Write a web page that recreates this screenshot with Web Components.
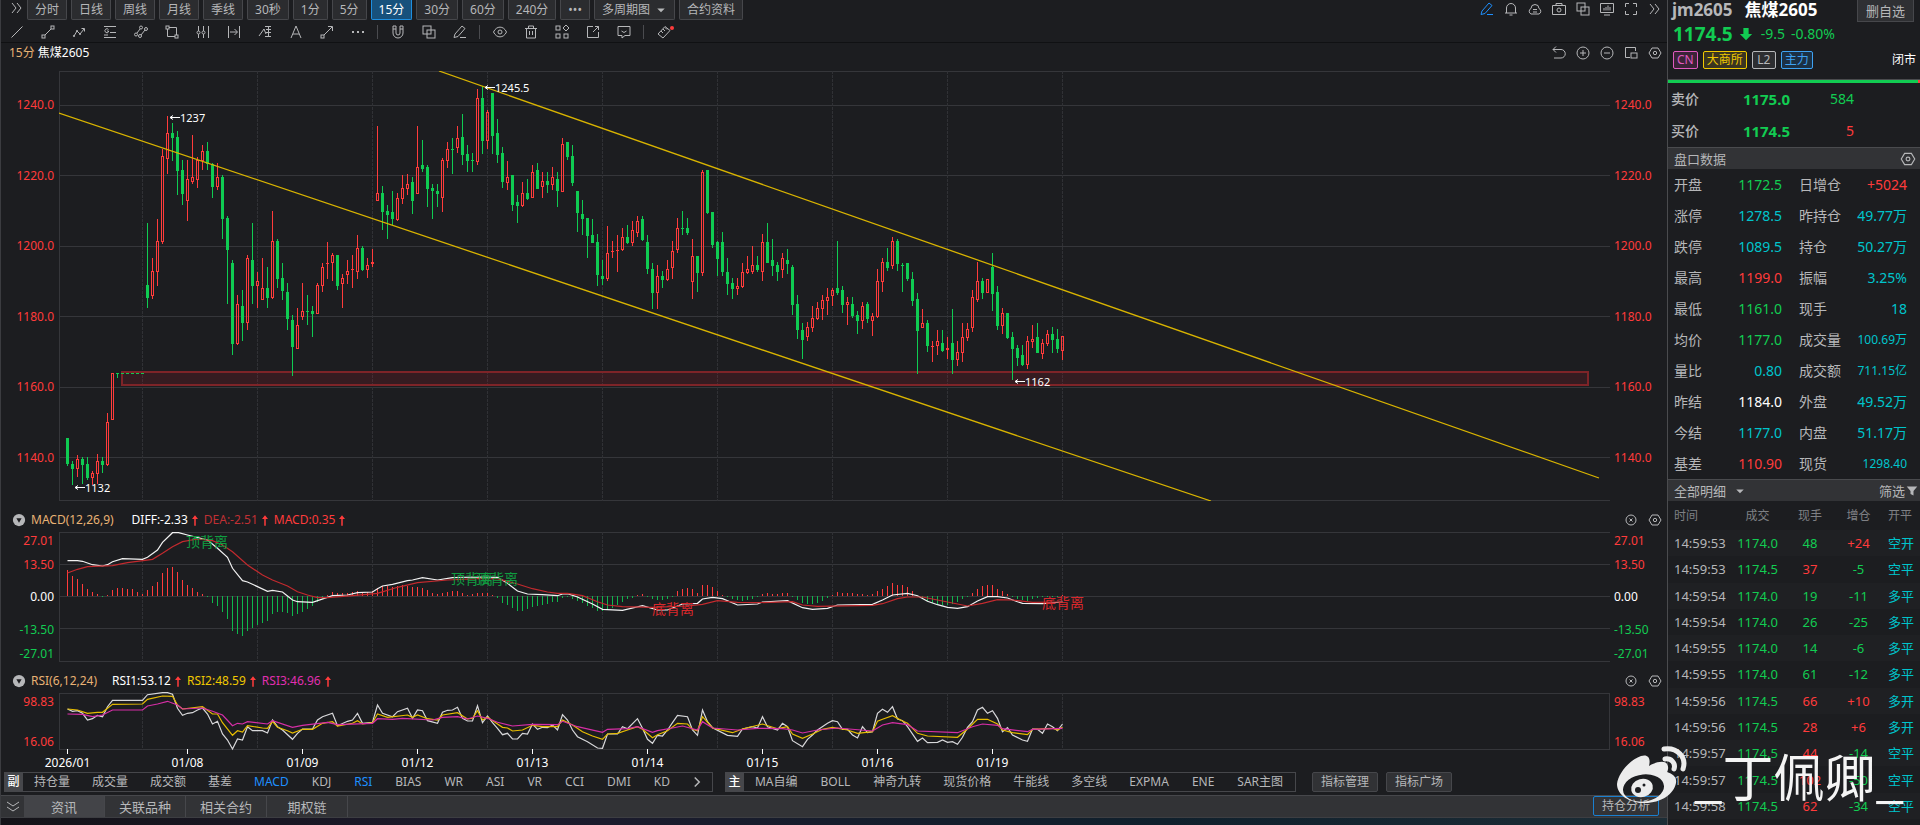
<!DOCTYPE html>
<html lang="zh-CN">
<head>
<meta charset="utf-8">
<title>焦煤2605 - 15分</title>
<style>
	html, body {
		margin: 0;
		background: #1c1d20;
	}
	body {
		--bg: #1c1d20;
		--bar: #323336;
		--line: #3b3c40;
		--text: #b6b7b9;
		--red: #ff3b3b;
		--green: #12cc52;
		--cyan: #00c4cc;
		--blue: #1e90ff;
		color: var(--text);
		font: 12px/18px "Noto Sans", "Noto Sans CJK SC", sans-serif;
	}
</style>
</head>
<body>
<trade-app>
	<period-bar slot="top"></period-bar>
	<draw-tools slot="top"></draw-tools>
	<price-chart slot="charts"></price-chart>
	<macd-chart slot="charts"></macd-chart>
	<rsi-chart slot="charts"></rsi-chart>
	<indicator-bar slot="bottom"></indicator-bar>
	<info-tabs slot="bottom"></info-tabs>
	<quote-panel slot="side">
		<quote-head></quote-head>
		<quote-grid></quote-grid>
		<trade-list></trade-list>
	</quote-panel>
	<water-mark slot="over">_丁佩卿_</water-mark>
</trade-app>

<script>
const RESET = `
	:host { display: block; box-sizing: border-box; }
	* { box-sizing: border-box; }
	button, select {
		margin: 0;
		padding: 0;
		border: 0;
		border-radius: 0;
		background: none;
		color: inherit;
		font: inherit;
		white-space: nowrap;
		appearance: none;
	}
`;

function attach(el, css, html){
	el.attachShadow({mode:"open"});
	el.shadowRoot.innerHTML = `<style>${RESET}${css}</style>${html}`;
}

const ICONS = {
	chevrons: `<path d="M3 3l4 5-4 5M8 3l4 5-4 5"/>`,
	down: `<path d="M2 3l6 4 6-4M2 8l6 4 6-4"/>`,
	line: `<path d="M2.500 13.500l11-11"/>`,
	segment: `<path d="M5 11l6-6"/><rect x="2" y="11" width="3" height="3"/><rect x="11" y="2" width="3" height="3"/>`,
	wave: `<path d="M3 12l3-5 3 3 4-5M10.500 4.500H13.500V7.500"/><circle cx="3" cy="12" r=".7"/><circle cx="6" cy="7" r=".7"/><circle cx="9" cy="10" r=".7"/>`,
	fib: `<path d="M2 2.500h12M8 8.500h6M2 13.500h12M2 11h4"/><path d="M6.500 5.500a2 2 0 1 0 0 2.500V7H5"/>`,
	fork: `<path d="M4 9l3-4M8 11l4-5"/><circle cx="3" cy="10.500" r="1.500"/><circle cx="8" cy="3.500" r="1.500"/><circle cx="7" cy="12" r="1.500"/><circle cx="13" cy="5" r="1.500"/>`,
	crop: `<rect x="2" y="2" width="3" height="3"/><rect x="11" y="11" width="3" height="3"/><path d="M5 3.500h7.500V11M3.500 5v7.500H11"/>`,
	sliders: `<path d="M3.500 2v5M3.500 10v4M8.500 2v5M8.500 10v4M13.500 2v12"/><circle cx="3.500" cy="8.500" r="1.500"/><circle cx="8.500" cy="8.500" r="1.500"/>`,
	measure: `<path d="M2.500 2v12M13.500 2v12M4 8h7M8.500 5l3 3-3 3"/>`,
	ruler: `<path d="M2 12l5-7 2 5M8 2.500h6M9 5.500h5M9 8.500h5M8 12.500h6M11.500 2v11"/>`,
	letter: `<path d="M3 14L8 2l5 12M5 10h6"/>`,
	arrow: `<path d="M5 11l8-8M9 2.500h4.500V7"/><rect x="2" y="11" width="3" height="3"/>`,
	dots: `<path d="M2 8h2M7 8h2M12 8h2" stroke-width="2"/>`,
	magnet: `<path d="M3 2v7a5 5 0 0 0 10 0V2h-3v7a2 2 0 0 1-4 0V2zM3 5h3M10 5h3"/>`,
	layers: `<rect x="2" y="2" width="8" height="8"/><rect x="6" y="6" width="8" height="8"/>`,
	pencil: `<path d="M3 10l7-8 3 2.500-7 8-4 1zM8 13.500h6"/>`,
	eye: `<path d="M1.500 8c3-6.500 10-6.500 13 0-3 6.500-10 6.500-13 0z"/><circle cx="8" cy="8" r="2"/>`,
	trash: `<path d="M2 4.500h12M5.500 4V2h5v2M3.500 5v9h9V5M6.500 7v4M9.500 7v4"/>`,
	apps: `<rect x="2" y="2" width="4" height="4"/><rect x="2" y="10" width="4" height="4"/><rect x="10" y="10" width="4" height="4"/><path d="M12 1l3 3-3 3-3-3z"/>`,
	export: `<path d="M8 2.500H2.500v11h11V8M8 8l5.500-5.500M10 2.500h3.500V6"/>`,
	chat: `<path d="M2 2.500h12v9H9L6 14v-2.500H2zM5.500 7l2.500 1.500L10.500 7"/>`,
	tag: `<path d="M2 10l7-7.500 5 4-7 7.500zM5 7l2 2M7 5l2 2M9 3.500l2 2"/>`,
	bell: `<path d="M2 12h12M3.500 12V7a4.500 4.500 0 0 1 9 0v5M6.500 14h3"/>`,
	cloud: `<path d="M4 13a3 3 0 0 1 0-5.500 4 4 0 0 1 8 0A3 3 0 0 1 12 13zM6 8.500h4M6 11h4"/>`,
	camera: `<path d="M1.500 4.500h13v9h-13zM5 4V2.500h6V4"/><circle cx="8" cy="9" r="2"/>`,
	monitor: `<path d="M1.500 2.500h13v9h-13zM5 14h6M5 9.500V7M7 9.500V6M9 9.500V4.500M11 9.500V6"/>`,
	full: `<path d="M2.500 6V2.500H6M10 2.500h3.500V6M13.500 10v3.500H10M6 13.500H2.500V10"/>`,
	undo: `<path d="M5 1.500L2 4.500l3 3M2 4.500h8a4 4 0 0 1 0 8.500H3"/>`,
	plus: `<circle cx="8" cy="8" r="6"/><path d="M5 8h6M8 5v6"/>`,
	minus: `<circle cx="8" cy="8" r="6"/><path d="M5 8h6"/>`,
	close: `<circle cx="8" cy="8" r="5"/><path d="M6.500 6.500l3 3M9.500 6.500l-3 3"/>`,
	panes: `<path d="M7 12.500H2.500v-10h10V6"/><rect x="8" y="8" width="6" height="5"/>`,
	hex: `<path d="M5 3h6l3 5-3 5H5L2 8z"/><circle cx="8" cy="8" r="1.700"/>`,
	fold: `<circle cx="8" cy="8" r="7" fill="#b6b7b9" stroke="none"/><path d="M5 6h6l-3 5z" fill="#1c1d20" stroke="none"/>`,
	rise: `<path d="M8 1l4 5H9v9H7V6H4z" fill="currentColor" stroke="none"/>`,
	fall: `<path d="M5 1h6v7h4l-7 7-7-7h4z" fill="currentColor" stroke="none"/>`,
	caret: `<path d="M3 6h10l-5 5z" fill="currentColor" stroke="none"/>`,
	next: `<path d="M5 2l6 6-6 6" stroke-width="2"/>`,
	funnel: `<path d="M1 2h14l-5 6v6l-4-2V8z" fill="currentColor" stroke="none"/>`
};

class UiIcon extends HTMLElement {
	constructor(){
		super();
		attach(this, `
			:host { display: inline-block; width: 16px; height: 16px; flex: none; }
			svg { display: block; width: 100%; height: 100%; fill: none; stroke: currentColor; stroke-width: 1; }
		`, `<svg viewBox="0 0 16 16" aria-hidden="true"></svg>`);
	}
	connectedCallback(){
		this.shadowRoot.querySelector("svg").innerHTML = ICONS[this.getAttribute("name")];
	}
}
customElements.define("ui-icon", UiIcon);

const icon = (name, cls="") => `<ui-icon name="${name}" class="${cls}"></ui-icon>`;
const iconButton = (name, label) => `<button aria-label="${label}">${icon(name)}</button>`;

customElements.define("trade-app", class extends HTMLElement {
	constructor(){
		super();
		attach(this, `
			:host {
				display: grid;
				grid-template-columns: minmax(0, 1fr) 253px;
				min-height: 100vh;
				position: relative;
				overflow: hidden;
				background: var(--bg);
			}
			main {
				display: flex;
				flex-direction: column;
				border-left: 1px solid var(--line);
			}
			.desk {
				flex: 1;
				min-height: 7px;
				background: linear-gradient(90deg, #141318, #1d1a2c 30%, #10202c 70%, #1d2d36);
			}
		`, `
			<main>
				<slot name="top"></slot>
				<slot name="charts"></slot>
				<slot name="bottom"></slot>
				<div class="desk"></div>
			</main>
			<slot name="side"></slot>
			<slot name="over"></slot>
		`);
	}
});

customElements.define("period-bar", class extends HTMLElement {
	constructor(){
		super();
		const before = ["分时","日线","周线","月线","季线","30秒","1分","5分","15分","30分","60分","240分","•••"];
		const tools = [["pencil","画线"],["bell","预警"],["cloud","云端"],["camera","截图"],["layers","叠加"],["monitor","看盘"],["full","全屏"],["chevrons","收起"]];
		attach(this, `
			:host { display: flex; gap: 4px; height: 22px; align-items: flex-start; }
			.more { width: 22px; height: 18px; padding-left: 8px; }
			.tab, .pick {
				height: 20px;
				padding: 0 7px;
				border: 1px solid #46474b;
				border-top: 0;
				background: #2b2c2f;
				border-radius: 0 0 2px 2px;
				line-height: 18px;
			}
			.tab.on { background: #17517c; border-color: #1e8fe0; color: #fff; }
			.pick { display: flex; align-items: center; gap: 4px; }
			.pick ui-icon { width: 12px; height: 12px; pointer-events: none; }
			.tools { display: flex; margin-left: auto; }
			.tools button { width: 24px; height: 18px; display: grid; place-items: center; }
			.tools button:first-child { color: var(--blue); }
		`, `
			<button class="more" aria-label="展开">${icon("chevrons")}</button>
			${before.map((t) => `<button class="tab${t=="15分"?" on":""}">${t}</button>`).join("")}
			<label class="pick"><select aria-label="多周期图"><option>多周期图</option></select>${icon("caret")}</label>
			<button class="tab">合约资料</button>
			<div class="tools">${tools.map((t) => iconButton(...t)).join("")}</div>
		`);
	}
});

customElements.define("draw-tools", class extends HTMLElement {
	constructor(){
		super();
		const groups = [
			["line","segment","wave","fib","fork","crop","sliders","measure","ruler","letter","arrow","dots"],
			["magnet","layers","pencil"],
			["eye","trash","apps","export","chat"],
			["tag"]
		];
		attach(this, `
			:host { display: flex; height: 21px; border-bottom: 1px solid #101113; }
			button { width: 31px; height: 20px; display: inline-grid; place-items: center; position: relative; }
			hr { width: 1px; height: 14px; margin: 3px 4px; border: 0; background: #4a4b4f; }
			.tag::after {
				content: "";
				position: absolute;
				top: 4px;
				right: 5px;
				width: 4px;
				height: 4px;
				border-radius: 50%;
				background: var(--red);
			}
		`, groups.map((g) => g.map((n) => `<button class="${n}" aria-label="${n}">${icon(n)}</button>`).join("")).join("<hr>"));
	}
});

/* ---- chart data ---- */

// one bar per entry: direction (r up, g down), wick top, body top, body bottom, wick bottom
// values are thirds of a pixel
const BARS = `
g1134 1134 1213 1218,g1203 1212 1227 1274,r1185 1197 1227 1251,g1191 1197 1215 1272,g1191 1213 1254 1260,
r1232 1240 1253 1274,r1182 1203 1242 1272,g1191 1203 1215 1239,r1059 1086 1215 1218,r940 940 1081 1081,
g940 940 940 954,g940 940 940 940,g940 940 940 940,g940 940 940 940,g940 940 940 940,g940 940 940 940,
g489 675 714 744,r594 633 708 717,r477 543 636 678,r267 288 546 552,r168 219 297 342,g189 219 234 303,
g213 231 333 405,g300 330 402 435,r300 357 423 483,r225 351 366 372,r291 300 360 384,r255 273 303 330,
g246 273 312 330,g309 312 381 414,r309 351 381 390,g345 351 477 537,g468 474 570 732,g600 609 852 885,
r705 732 852 855,g690 738 789 843,r585 594 789 810,g489 600 678 732,r636 663 678 744,r594 684 720 720,
g621 684 714 744,r453 543 714 717,g537 543 657 684,g609 654 693 720,g669 696 777 810,g765 780 861 948,
r744 795 867 867,r669 753 770 780,g705 754 754 795,g738 753 762 831,r669 675 762 762,r609 621 678 696,
r546 609 609 657,r579 585 609 663,g585 585 678 690,r642 654 672 744,r600 633 645 672,r585 628 628 684,
r525 564 636 657,g558 564 630 633,r594 615 630 654,r567 606 612 621,r198 399 423 423,g378 399 456 510,
g435 453 465 537,g393 456 477 495,r399 414 480 483,r345 384 417 432,r342 372 388 405,g351 366 423 462,
r198 321 402 402,g240 315 327 336,g315 321 387 441,g372 384 393 477,g372 393 402 441,r294 300 414 456,
r246 267 303 324,g234 267 267 342,r198 234 264 279,g162 231 285 315,g255 282 303 336,g279 300 300 336,
r87 114 306 315,g78 114 243 282,r150 156 243 267,g99 99 228 282,g177 219 285 309,g261 279 366 384,
r303 351 369 390,g345 345 435 453,g405 426 438 489,r366 399 438 441,g357 399 417 420,r315 336 414 414,
g309 330 387 387,r336 363 381 414,g336 363 375 399,r321 351 375 390,g336 357 393 441,r234 252 396 396,
g246 246 291 300,g255 288 369 378,g393 393 459 516,g420 462 477 525,g474 474 528 594,g477 525 549 549,
g522 546 645 678,g600 648 657 675,r498 579 657 663,r543 574 574 594,r525 569 569 636,r504 531 570 573,
g495 531 549 552,r483 510 549 558,r468 483 519 531,g468 477 540 543,g525 546 627 642,g609 627 699 747,
r615 648 699 747,g633 648 660 684,r600 627 660 663,r543 573 624 657,r474 504 570 579,g453 505 505 525,
g474 504 519 525,r537 588 666 717,g588 588 639 696,r330 336 639 648,g330 330 459 462,g456 456 555 564,
g543 546 597 648,g516 546 636 648,g594 636 672 705,g654 669 687 717,r654 678 687 705,r609 636 681 684,
r588 627 640 642,r558 615 636 642,g588 615 630 636,r522 546 636 663,g489 546 609 609,g537 600 618 648,
g606 615 636 663,r579 594 630 654,g567 600 612 642,g615 621 735 765,g705 732 810 837,g789 810 840 897,
r786 801 831 843,r738 774 804 816,r726 744 777 780,r705 720 747 780,r684 711 723 765,r684 690 708 738,
g543 684 699 705,g678 690 735 759,r711 726 735 795,g711 732 768 774,g753 765 783 822,r726 738 783 807,
g726 732 777 789,r759 768 783 828,r627 663 771 774,r594 606 666 696,g564 606 624 633,r531 543 618 627,
g537 543 612 633,g609 616 616 696,g609 609 657 663,g636 657 723 738,g699 717 813 942,r747 789 804 804,
g780 789 858 876,r843 857 857 906,r810 843 858 885,g810 849 873 876,r831 865 870 897,g747 849 900 942,
r843 876 900 918,r789 831 879 906,r789 807 834 843,r690 711 804 816,r606 663 720 726,g654 663 699 717,
r657 657 699 699,g579 621 702 753,g678 696 798 810,r744 759 798 822,g759 759 834 837,g816 831 867 960,
g855 864 894 918,g855 885 915 918,r828 843 915 927,r795 837 846 864,g789 831 879 879,r837 849 882 897,
r810 822 852 858,g801 822 840 879,g807 837 867 879,r828 828 873 900`;

const HIST = [
78,60,52,37,22,12,6,-3,3,18,24,24,22,20,12,6,18,30,42,69,84,87,72,48,33,24,12,6,-3,-20,-30,-48,-68,-105,-114,-120,-105,-96,-87,-81,
-74,-54,-48,-48,-50,-60,-54,-48,-39,-30,-18,-8,3,12,9,9,9,12,15,9,12,15,24,30,30,28,30,33,30,27,27,24,18,10,6,9,12,16,15,9,
4,6,9,9,9,3,-5,-20,-27,-36,-44,-44,-40,-33,-30,-27,-24,-18,-18,-6,-4,-8,-15,-22,-30,-36,-44,-44,-40,-35,-28,-18,-10,-5,4,7,-4,-10,-12,-12,
-8,-4,14,20,24,20,10,32,34,26,16,4,-4,-8,-12,-14,-12,-8,-4,6,8,7,7,8,8,-4,-12,-20,-25,-24,-20,-14,-6,4,12,10,10,8,5,5,
4,6,14,22,30,38,34,32,26,14,-4,-8,-15,-22,-28,-28,-28,-24,-18,-10,-4,10,22,29,32,32,22,16,5,-4,-9,-12,-14,-10,-6,-3,-3,-3,-2,4];

// "bar,y" pairs, y in thirds of a pixel
const DIFF = "0,182 2,182 3,184 5,194 7,198 8,194 9,185 11,176 15,178 16,172 18,150 19,127 21,98 22,97 24,105 28,120 30,145 32,172 33,205 35,242 36,246 40,274 41,271 43,276 44,288 45,300 46,305 49,307 53,287 56,285 58,278 61,276 62,266 63,258 65,253 68,242 69,240 71,233 74,240 77,233 82,231 86,232 88,250 90,273 92,282 95,284 98,287 99,282 100,281 102,291 105,312 107,328 111,331 115,317 118,330 120,330 123,312 126,310 127,297 129,292 131,296 134,315 138,312 139,306 144,302 147,323 149,328 152,325 154,315 161,313 163,300 165,285 168,280 170,287 172,304 174,314 176,322 178,325 180,320 182,303 184,290 186,290 188,294 190,305 191,310 195,311 199,306";
const DEA = "0,219 2,208 4,200 9,197 12,188 17,178 19,160 21,140 23,125 26,117 29,122 31,135 33,155 36,195 39,225 41,240 44,258 46,275 48,285 50,293 52,293 57,287 62,280 66,262 70,248 76,240 82,236 86,236 90,252 93,266 96,276 98,280 100,280 103,287 106,305 108,315 111,320 117,322 124,318 127,313 130,302 134,307 138,308 145,305 147,315 150,319 161,316 163,311 166,296 168,291 171,291 175,303 180,318 183,310 186,299 189,300 193,307 199,306";
const RSI1 = "0,627 1,634 2,632 3,640 4,660 5,656 6,646 7,650 8,620 9,601 15,601 16,584 19,578 20,578 21,583 22,625 23,646 24,640 25,638 26,630 27,624 28,642 29,672 30,664 31,702 32,720 33,747 34,717 35,720 36,680 37,692 39,692 40,699 41,660 42,680 43,690 45,718 46,700 47,687 49,687 50,660 51,650 53,640 54,677 56,664 57,660 58,640 59,670 61,667 62,615 63,640 65,650 66,635 68,625 69,655 70,630 71,632 72,662 74,670 75,637 76,631 77,630 78,622 79,655 80,663 81,663 82,617 83,668 84,648 85,668 86,685 87,704 88,700 89,717 90,717 91,700 92,702 93,672 94,688 95,682 96,683 97,675 98,690 99,644 100,660 101,690 102,710 104,725 106,744 107,745 108,702 110,702 111,680 112,686 114,656 115,685 116,718 117,730 118,706 119,708 120,690 121,668 122,646 124,650 125,690 126,706 127,630 128,665 129,683 132,706 134,709 135,687 137,680 138,684 139,650 140,680 142,690 143,670 144,680 145,722 147,740 148,718 149,705 150,690 152,670 153,662 154,665 155,688 156,688 157,705 158,714 159,680 160,698 161,695 162,640 163,628 164,637 165,620 166,657 167,662 168,680 170,724 171,714 172,728 174,727 175,720 176,727 177,725 178,733 179,712 180,682 181,665 182,630 183,622 184,640 185,632 186,655 187,695 188,683 189,705 191,720 192,724 193,687 194,688 195,700 196,672 197,680 198,692 199,672";
const RSI2 = "0,627 2,630 4,640 6,637 7,637 9,613 15,612 16,598 19,588 21,589 22,615 23,627 27,620 29,642 30,642 31,668 33,706 34,692 35,696 36,677 39,684 40,685 41,664 42,682 44,692 45,699 47,688 49,688 51,670 53,665 54,678 57,670 58,662 59,672 61,668 62,642 64,652 68,645 69,652 70,645 72,656 74,660 75,645 78,638 80,657 81,655 82,632 83,660 84,652 86,672 87,682 88,684 89,693 91,690 93,676 95,680 98,680 99,660 101,675 103,695 105,708 107,718 108,702 110,700 112,690 114,680 115,688 117,713 118,704 120,692 122,670 124,672 125,688 126,692 127,650 129,684 133,698 135,687 139,672 142,686 144,680 145,702 147,715 149,702 151,688 153,682 156,690 158,700 161,695 162,664 163,658 165,647 167,663 168,670 170,700 172,708 178,712 180,687 182,658 184,658 186,672 187,690 189,698 192,704 193,688 197,685 198,690 199,682";
const RSI3 = "0,642 3,643 5,650 7,645 9,630 15,630 16,618 18,612 20,604 22,615 23,627 27,624 29,634 31,645 33,677 34,670 35,672 36,665 40,672 41,662 45,682 47,676 52,667 54,674 61,670 62,656 65,658 67,655 73,660 75,652 78,650 80,657 82,648 84,655 86,667 89,678 93,673 98,674 99,664 102,680 107,697 108,688 112,686 114,680 117,697 118,692 121,684 123,678 126,690 127,665 129,684 134,690 138,685 143,686 145,690 147,699 150,690 154,684 161,693 163,675 165,668 168,674 170,693 178,698 181,680 183,672 186,676 187,686 192,695 193,688 199,685";

const STEP = 5;
const barX = (i) => 8.5+i*STEP;

/* Shared frame of the three charts: header row, two value axes and the plot */
class BaseChart extends HTMLElement {
	constructor(){
		super();
		attach(this, `
			header { display: flex; align-items: center; height: 31px; padding: 7px 0 0 11px; }
			header.title { height: 28px; padding: 0 0 9px 8px; }
			header .tools { display: flex; margin-left: auto; }
			header .tools button { width: 24px; height: 18px; display: grid; place-items: center; }
			header > ui-icon { width: 12px; height: 13px; margin: 0 3px 0 1px; color: var(--red); }
			header .fold { display: grid; margin-right: 5px; }
			header .fold ui-icon { width: 14px; height: 14px; }
			.name { color: #e8b274; }
			.name.wide { margin-right: 15px; }
			.macd .wide { margin-right: 18px; }
			.white { color: #fff; }
			.plots { display: grid; grid-template-columns: 58px minmax(0, 1fr) 57px; }
			svg { display: block; width: 100%; overflow: hidden; }
			svg.axis { overflow: visible; }
			text { dominant-baseline: central; font-size: 12px; fill: var(--red); }
			.axis .zero { fill: #fff; }
			.axis .neg { fill: var(--green); }
			.grid { stroke: #35363a; shape-rendering: crispEdges; }
			.grid .v { stroke-dasharray: 3 1; stroke: #303135; }
			polyline { fill: none; }
		`, `
			${this.header()}
			<div class="plots">
				<svg class="axis" height="${this.full}">${this.axis(53, "end")}</svg>
				<svg height="${this.full}">${this.grid()}${this.plot()}</svg>
				<svg class="axis" height="${this.full}">${this.axis(4, "start")}</svg>
			</div>
		`);
	}
	get full(){
		return this.size;
	}
	axis(x, anchor){
		return this.labels.map(([t,y]) => {
			let cls = t=="0.00"?"zero":t[0]=="-"?"neg":"";
			return `<text class="${cls}" x="${x}" y="${y}" text-anchor="${anchor}">${t}</text>`;
		}).join("");
	}
	grid(){
		let h = this.size;
		let out = "";
		for (let y of [0,...this.rows,h-1]){
			out += `<line x1="0" x2="100%" y1="${y+0.5}" y2="${y+0.5}"/>`;
		}
		for (let k=0;k<9;k++){
			let x = 83.5+k*115;
			out += `<line class="v" x1="${x}" x2="${x}" y1="0" y2="${h}"/>`;
		}
		out += `<line x1="0.5" x2="0.5" y1="0" y2="${h}"/>`;
		out += `<svg x="100%" overflow="visible"><line x1="-0.5" x2="-0.5" y1="0" y2="${h}"/></svg>`;
		return `<g class="grid">${out}</g>`;
	}
	curve(data, top, color){
		let points = data.split(" ").map((p) => {
			let [i,y] = p.split(",").map(Number);
			return barX(i)+","+(y/3-top).toFixed(1);
		});
		return `<polyline points="${points.join(" ")}" stroke="${color}" stroke-width="1.2"/>`;
	}
	paneTools(){
		return `<div class="tools">${iconButton("close","关闭")}${iconButton("hex","设置")}</div>`;
	}
}

customElements.define("price-chart", class extends BaseChart {
	get size(){ return 430; }
	get rows(){ return [34,104,175,245,316,386]; }
	get labels(){
		return [["1240.0",33],["1220.0",104],["1200.0",174],["1180.0",245],["1160.0",315],["1140.0",386]];
	}
	header(){
		const tools = [["undo","撤销"],["plus","放大"],["minus","缩小"],["panes","区间"],["hex","设置"]];
		return `<header class="title">
			<span class="name">15分</span>&nbsp;<span class="white">焦煤2605</span>
			<div class="tools">${tools.map((t) => iconButton(...t)).join("")}</div>
		</header>`;
	}
	bar(text, i){
		let [top,a,b,low] = text.slice(1).split(" ").map((v) => Math.round(v/3-11));
		let x = barX(i);
		if (text[0]=="g"){
			return `<g fill="#0fcc52"><rect x="${x-0.5}" y="${top}" width="1" height="${Math.max(1,low-top)}"/><rect x="${x-1.5}" y="${a}" width="3" height="${Math.max(1,b-a)}"/></g>`;
		}
		let wick = `<rect x="${x-0.5}" y="${top}" width="1" height="${a-top}"/><rect x="${x-0.5}" y="${b}" width="1" height="${low-b}"/>`;
		let body = b-a<2
			? `<rect x="${x-1.5}" y="${a}" width="3" height="1"/>`
			: `<rect x="${x-1}" y="${a+0.5}" width="2" height="${b-a-1}" fill="none" stroke="#ff3b3b"/>`;
		return `<g fill="#ff3b3b">${wick}${body}</g>`;
	}
	mark(text, x, y){
		return `<path d="M${x} ${y+0.5}h10M${x+3} ${y-1.5}l-3 2 3 2" fill="none" stroke="#fff"/>
			<text x="${x+10}" y="${y}" style="fill:#fff;font-size:11px">${text}</text>`;
	}
	plot(){
		let bars = BARS.trim().split(/,\s*/).map((t,i) => this.bar(t,i)).join("");
		return `
			<rect x="63" y="301" width="1466" height="13" fill="#c81e28" fill-opacity="0.15" stroke="#7e2428" stroke-width="2"/>
			<g shape-rendering="crispEdges">${bars}</g>
			<path d="M380 0L1540 407M0 42L1152 430" stroke="#d9b400" stroke-width="1.300" fill="none"/>
			${this.mark("1245.5",426,16)}${this.mark("1237",111,46)}${this.mark("1132",16,416)}${this.mark("1162",956,310)}
			<svg x="100%" overflow="visible"><path d="M-8 265l8-4v8z" fill="#fff"/></svg>
		`;
	}
});

customElements.define("macd-chart", class extends BaseChart {
	get size(){ return 130; }
	get rows(){ return [32,64,96]; }
	get labels(){
		return [["27.01",8],["13.50",32],["0.00",64],["-13.50",97],["-27.01",121]];
	}
	header(){
		return `<header class="macd">
			<button class="fold" aria-label="折叠">${icon("fold")}</button>
			<span class="name wide">MACD(12,26,9)</span>
			<span class="white">DIFF:-2.33</span>${icon("rise")}
			<span style="color:#c03034">DEA:-2.51</span>${icon("rise")}
			<span style="color:var(--red)">MACD:0.35</span>${icon("rise")}
			${this.paneTools()}
		</header>`;
	}
	plot(){
		let bars = HIST.map((v,i) => {
			let h = Math.max(1,Math.round(Math.abs(v)/3));
			return `<rect x="${barX(i)-0.5}" y="${v>0?64-h:64}" width="1" height="${h}" fill="${v>0?"#ff3b3b":"#0fb84c"}"/>`;
		}).join("");
		let note = (t,x,y,c) => `<text x="${x}" y="${y}" style="fill:${c};font-size:14px">${t}</text>`;
		return `
			<g shape-rendering="crispEdges">${bars}</g>
			${this.curve(DIFF,32,"#f2f2f2")}${this.curve(DEA,32,"#c22a2e")}
			${note("顶背离",127,9,"#109c40")}${note("顶背离",392,46,"#109c40")}${note("顶背离",417,46,"#109c40")}
			${note("底背离",593,76,"#d8282c")}${note("底背离",983,70,"#d8282c")}
		`;
	}
});

customElements.define("rsi-chart", class extends BaseChart {
	get size(){ return 57; }
	get full(){ return 79; }
	get rows(){ return []; }
	get labels(){ return [["98.83",8],["16.06",48]]; }
	header(){
		return `<header>
			<button class="fold" aria-label="折叠">${icon("fold")}</button>
			<span class="name wide">RSI(6,12,24)</span>
			<span class="white">RSI1:53.12</span>${icon("rise")}
			<span style="color:#f0c800">RSI2:48.59</span>${icon("rise")}
			<span style="color:#e02fb0">RSI3:46.96</span>${icon("rise")}
			${this.paneTools()}
		</header>`;
	}
	plot(){
		let days = [["2026/01",0],["01/08",24],["01/09",47],["01/12",70],["01/13",93],["01/14",116],["01/15",139],["01/16",162],["01/19",185]];
		return `
			${this.curve(RSI1,193,"#d8d8da")}${this.curve(RSI2,193,"#e6bc00")}${this.curve(RSI3,193,"#d62ea6")}
		` + days.map(([t,i]) => `
			<rect x="${barX(i)-0.5}" y="56" width="1" height="5" fill="#fff"/>
			<text x="${barX(i)}" y="69" text-anchor="middle" style="fill:#fff">${t}</text>
		`).join("");
	}
	connectedCallback(){
		// the first date is wider than the room left of its bar
		this.shadowRoot.querySelectorAll("svg").forEach((s) => s.style.overflow = "visible");
	}
});

customElements.define("indicator-bar", class extends HTMLElement {
	constructor(){
		super();
		const sub = ["持仓量","成交量","成交额","基差","MACD","KDJ","RSI","BIAS","WR","ASI","VR","CCI","DMI","KD"];
		const main = ["MA自编","BOLL","神奇九转","现货价格","牛能线","多空线","EXPMA","ENE","SAR主图"];
		const cls = (t) => (/^[A-Z]/.test(t)?"latin":"")+(t=="MACD"||t=="RSI"?" on":"");
		const items = (list) => list.map((t) => `<button class="${cls(t)}">${t}</button>`).join("");
		attach(this, `
			:host { display: flex; height: 20px; padding-left: 3px; margin-bottom: 3px; }
			.group {
				display: flex;
				align-items: center;
				border: 1px solid #46474b;
				border-left: 0;
				margin-right: 12px;
			}
			b { width: 19px; line-height: 20px; margin: -1px 0; text-align: center; background: #46474b; color: #fff; font-weight: 500; }
			.group button { padding: 0 11px; line-height: 18px; }
			.group .latin { padding-right: 12px; }
			.group .next { padding: 0 9px; }
			.group ui-icon { width: 12px; height: 12px; display: block; }
			.on { color: var(--blue); }
			.wide {
				width: 66px;
				height: 20px;
				margin-left: 4px;
				margin-right: 4px;
				border: 1px solid #46474b;
				border-radius: 2px;
				background: #313235;
				line-height: 18px;
			}
		`, `
			<div class="group"><b>副</b>${items(sub)}<button class="next" aria-label="更多">${icon("next")}</button></div>
			<div class="group"><b>主</b>${items(main)}</div>
			<button class="wide">指标管理</button>
			<button class="wide">指标广场</button>
		`);
	}
});

customElements.define("info-tabs", class extends HTMLElement {
	constructor(){
		super();
		attach(this, `
			:host {
				display: flex;
				height: 23px;
				background: var(--bar);
				border-top: 1px solid #46474b;
				border-bottom: 1px solid #3d3e42;
				font-size: 13px;
			}
			.more { width: 23px; display: grid; place-items: center; }
			.tab { min-width: 81px; padding: 0 12px; border-right: 1px solid #46474b; }
			.tab.on { background: #434448; }
			.hold {
				height: 20px;
				width: 66px;
				margin: 0 8px 0 auto;
				border: 1px solid #1a80d0;
				border-radius: 2px;
				font-size: 12px;
				line-height: 18px;
			}
		`, `
			<button class="more" aria-label="收起">${icon("down")}</button>
			<button class="tab on">资讯</button>
			<button class="tab">关联品种</button>
			<button class="tab">相关合约</button>
			<button class="tab">期权链</button>
			<button class="hold">持仓分析</button>
		`);
	}
});

/* ---- quote panel ---- */

customElements.define("quote-panel", class extends HTMLElement {
	constructor(){
		super();
		attach(this, `
			:host { display: flex; flex-direction: column; border-left: 1px solid #4a4b4e; }
			::slotted(trade-list) { flex: 1; }
		`, `<slot></slot>`);
	}
});

customElements.define("quote-head", class extends HTMLElement {
	constructor(){
		super();
		attach(this, `
			.id { display: flex; align-items: flex-start; height: 22px; padding: 0 6px 0 4px; font-size: 17px; font-weight: 700; line-height: 20px; }
			.id span { margin-left: 12px; color: #fff; }
			.id button {
				margin-left: auto;
				width: 57px;
				height: 22px;
				border: 1px solid #46474b;
				border-top: 0;
				background: #2f3033;
				font-size: 13px;
				font-weight: 400;
			}
			.last { display: flex; align-items: center; height: 24px; padding-left: 5px; font-size: 14px; color: var(--green); }
			.last b { font-size: 19px; }
			.last ui-icon { width: 14px; height: 14px; margin: 0 8px 0 6px; }
			.last span { margin-right: 6px; }
			.tags { display: flex; gap: 5px; height: 33px; padding: 5px 4px 0 5px; }
			.tags span { min-width: 24px; height: 18px; padding: 0 3px; border: 1px solid; border-radius: 2px; line-height: 16px; text-align: center; }
			.tags em { margin-left: auto; font-style: normal; color: #fff; }
			.cn { color: #e05ac0; border-color: #93387e; background: #3b2338; }
			.ex { color: #f0c800; border-color: #8d7812; background: #3a3520; }
			.l2 { color: #b6b7b9; border-color: #66676b; background: #2d2e31; }
			.hot { color: #3ea2f2; border-color: #246094; background: #1b3044; }
			.ratio { display: flex; height: 4px; border-top: 1px solid #4a4b4e; background: var(--green); }
			.ratio i { margin-left: auto; width: 2px; background: var(--red); }
			.book { display: grid; grid-template-columns: 54px 65px 64px; grid-auto-rows: 32px; align-items: center; padding: 0 0 0 3px; height: 64px; font-size: 14px; }
			.book .k { font-weight: 500; }
			.book b { font-size: 15px; font-weight: 700; color: var(--green); text-align: right; }
			.book .n { text-align: right; color: var(--green); }
			.book .up { color: var(--red); }
		`, `
			<div class="id">jm2605<span>焦煤2605</span><button>删自选</button></div>
			<div class="last"><b>1174.5</b>${icon("fall")}<span>-9.5</span><span>-0.80%</span></div>
			<div class="tags"><span class="cn">CN</span><span class="ex">大商所</span><span class="l2">L2</span><span class="hot">主力</span><em>闭市</em></div>
			<div class="ratio"><i></i></div>
			<div class="book">
				<span class="k">卖价</span><b>1175.0</b><span class="n">584</span>
				<span class="k">买价</span><b>1174.5</b><span class="n up">5</span>
			</div>
		`);
	}
});

customElements.define("quote-grid", class extends HTMLElement {
	constructor(){
		super();
		const rows = [
			["开盘","1172.5","green","日增仓","+5024","red"],
			["涨停","1278.5","cyan","昨持仓","49.77万","cyan"],
			["跌停","1089.5","cyan","持仓","50.27万","cyan"],
			["最高","1199.0","red","振幅","3.25%","cyan"],
			["最低","1161.0","green","现手","18","cyan"],
			["均价","1177.0","green","成交量","100.69万","cyan small"],
			["量比","0.80","cyan","成交额","711.15亿","cyan small"],
			["昨结","1184.0","white","外盘","49.52万","cyan"],
			["今结","1177.0","cyan","内盘","51.17万","cyan"],
			["基差","110.90","red","现货","1298.40","cyan small"]
		];
		attach(this, `
			header {
				display: flex;
				align-items: center;
				height: 22px;
				padding: 0 3px 0 6px;
				border-top: 1px solid #4a4b4e;
				background: var(--bar);
				font-size: 13px;
			}
			header button { display: grid; margin-left: auto; }
			header ui-icon { width: 18px; height: 18px; }
			dl {
				display: grid;
				grid-template-columns: 40px 68px 60px 1fr;
				grid-auto-rows: 31px;
				align-items: center;
				margin: 0;
				padding: 0 13px 0 6px;
				font-size: 14px;
			}
			dt:nth-of-type(even) { padding-left: 17px; white-space: nowrap; }
			dd { margin: 0; text-align: right; white-space: nowrap; }
			.green { color: var(--green); }
			.red { color: var(--red); }
			.cyan { color: var(--cyan); }
			.white { color: #fff; }
			.small { font-size: 12px; }
		`, `
			<header>盘口数据<button aria-label="设置">${icon("hex")}</button></header>
			<dl>${rows.map(([a,b,c,d,e,f]) => `<dt>${a}</dt><dd class="${c}">${b}</dd><dt>${d}</dt><dd class="${f}">${e}</dd>`).join("")}</dl>
		`);
	}
});

customElements.define("trade-list", class extends HTMLElement {
	constructor(){
		super();
		// time, price, lots, open interest change, type; lots sign gives the side
		const rows = [
			["14:59:53","1174.0",-48,24,"空开"],
			["14:59:53","1174.5",37,-5,"空平"],
			["14:59:54","1174.0",-19,-11,"多平"],
			["14:59:54","1174.0",-26,-25,"多平"],
			["14:59:55","1174.0",-14,-6,"多平"],
			["14:59:55","1174.0",-61,-12,"多平"],
			["14:59:56","1174.5",66,10,"多开"],
			["14:59:56","1174.5",28,6,"多开"],
			["14:59:57","1174.5",44,-14,"空平"],
			["14:59:57","1174.5",102,-50,"空平"],
			["14:59:58","1174.5",62,-34,"空平"]
		];
		const side = (n) => n>0?"red":"green";
		attach(this, `
			:host { display: flex; flex-direction: column; padding-bottom: 6px; }
			header {
				display: flex;
				align-items: center;
				height: 22px;
				padding: 0 2px 0 6px;
				border-top: 1px solid #4a4b4e;
				background: var(--bar);
				font-size: 13px;
			}
			header label { display: flex; align-items: center; gap: 7px; }
			header button { display: flex; align-items: center; gap: 1px; margin-left: auto; }
			header ui-icon { width: 12px; height: 12px; }
			table { width: 100%; table-layout: fixed; border-collapse: collapse; font-size: 13px; text-align: center; }
			th { height: 29px; padding: 0; font-size: 12px; font-weight: 400; color: #7f8084; }
			td { height: 26px; padding: 0; white-space: nowrap; }
			tbody tr:nth-child(odd) { background: #1f2023; }
			th:first-child, td:first-child { padding-left: 6px; text-align: left; }
			th:last-child, td:last-child { padding-left: 9px; text-align: left; }
			.wrap { flex: 1; display: grid; }
			.green { color: var(--green); }
			.red { color: var(--red); }
			.cyan { color: var(--cyan); }
		`, `
			<header>
				<label><select aria-label="明细"><option>全部明细</option></select>${icon("caret")}</label>
				<button>筛选${icon("funnel")}</button>
			</header>
			<div class="wrap"><table>
				<colgroup><col style="width:65px"><col style="width:49px"><col style="width:56px"><col style="width:41px"><col></colgroup>
				<thead><tr><th>时间</th><th>成交</th><th>现手</th><th>增仓</th><th>开平</th></tr></thead>
				<tbody>${rows.map(([t,p,n,d,k]) => `<tr>
					<td>${t}</td><td class="green">${p}</td><td class="${side(n)}">${Math.abs(n)}</td>
					<td class="${side(d)}">${d>0?"+"+d:d}</td><td class="cyan">${k}</td>
				</tr>`).join("")}</tbody>
			</table></div>
		`);
	}
});

customElements.define("water-mark", class extends HTMLElement {
	constructor(){
		super();
		attach(this, `
			:host {
				position: absolute;
				right: 16px;
				bottom: 21px;
				display: flex;
				align-items: center;
				gap: 7px;
				color: #f4f4f4;
				font: 400 51px/58px "Noto Sans CJK SC", sans-serif;
				pointer-events: none;
			}
			svg { display: block; width: 70px; height: 58px; }
		`, `
			<svg viewBox="0 0 70 58" aria-hidden="true">
				<path fill="#ececec" fill-rule="evenodd" d="M0 38C1 28 12 14 24 10c7-2 10 2 8 10 6-4 16-6 18-2 2 3 1 6 0 8 6 2 10 5 9 11-2 11-15 20-31 20S0 49 0 38zM6 44a20.500 13.500-8 1 0 41-4a20.500 13.500-8 1 0-41 4z"/>
				<ellipse cx="25" cy="42" rx="11" ry="9" fill="#ececec" transform="rotate(-15 25 42)"/>
				<circle cx="21" cy="44" r="3" fill="#1c1d20"/>
				<circle cx="27" cy="39" r="1.500" fill="#1c1d20"/>
				<path d="M47 3c13-2 23 8 19 20M48 13c6-1 11 4 9 10" fill="none" stroke="#ececec" stroke-width="5" stroke-linecap="round"/>
			</svg>
			<slot></slot>
		`);
	}
});
</script>
</body>
</html>
